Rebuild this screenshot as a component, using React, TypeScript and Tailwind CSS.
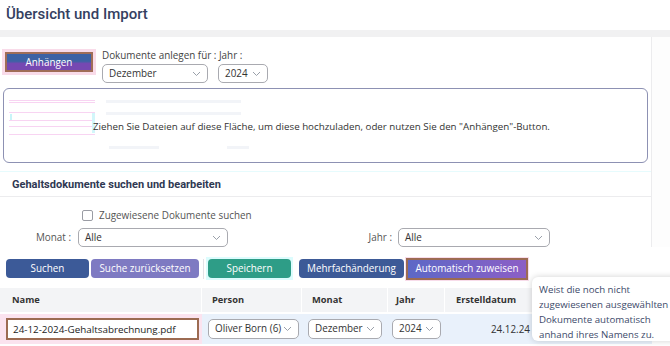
import React from "react";

const Chevron = () => (
  <svg width="9" height="6" viewBox="0 0 9 6" className="shrink-0">
    <path d="M1 1l3.5 3.5L8 1" fill="none" stroke="#9aa0aa" strokeWidth="1" />
  </svg>
);

const Select = ({ value, className = "" }: { value: string; className?: string }) => (
  <div
    className={`flex items-center justify-between h-[19px] rounded-[5px] border border-[#a9aab0] bg-white pl-[6px] pr-[6px] text-[9.9px] text-[#333] whitespace-nowrap ${className}`}
  >
    <span className="leading-none">{value}</span>
    <Chevron />
  </div>
);

export default function App() {
  return (
    <div
      className="relative w-[670px] h-[346px] overflow-hidden bg-white text-[#444]"
      style={{ fontFamily: '"Open Sans", "Noto Sans", sans-serif' }}
    >
      {/* Title */}
      <div className="h-[30px] pl-[6px] pt-[3px]">
        <h1
          className="text-[15px] font-medium text-[#34405f] leading-[22px]"
          style={{ fontFamily: 'Roboto, "Noto Sans", sans-serif' }}
        >
          Übersicht und Import
        </h1>
      </div>
      <div className="h-[7px] bg-[#f1f1f2]" />

      <div className="flex">
        {/* main card */}
        <div className="w-[652px] border-r border-[#ececee]">
          {/* Anhängen row */}
          <div className="flex items-start pt-[12px] pl-[2px] h-[51px]">
            <div className="flex p-[3px] bg-[#f9dbe9]">
              <div
                className="w-[88px] h-[20px] border-2 border-[#a06d57] flex items-center justify-center text-[9.9px] text-white"
                style={{ background: "linear-gradient(#3d62a4 0%, #3d62a4 45%, #7648b2 60%, #7648b2 100%)" }}
              >
                Anhängen
              </div>
            </div>
            <div className="ml-[6px] flex flex-col">
              <div className="text-[9.9px] leading-[13px] text-[#444]">Dokumente anlegen für : Jahr :</div>
              <div className="flex gap-[10px] mt-[2px]">
                <Select value="Dezember" className="w-[106px]" />
                <Select value="2024" className="w-[50px]" />
              </div>
            </div>
          </div>

          {/* Drop zone */}
          <div className="mx-[3px] h-[75px] rounded-[6px] border border-[#8d91b3] relative">
            {/* ghost artifacts */}
            <div className="absolute left-[5px] top-[11px] w-[86px] h-[3px] border-y border-[#f8d4f2]" />
            <div className="absolute left-[5px] top-[23px] w-[86px] h-[9px] border-y border-[#f8d4f2]" />
            <div className="absolute left-[5px] top-[37px] w-[86px] h-[9px] border-y border-[#f8d4f2]" />
            <div className="absolute left-[6px] top-[25px] w-[2px] h-[6px] bg-[#c8f4f8]" />
            <div className="absolute left-[88px] top-[24px] w-[3px] h-[20px] bg-[#d2f6fa]" />
            <div className="absolute left-[102px] top-[11px] w-[135px] h-[3px] bg-[#f2f4f8]" />
            <div className="absolute left-[102px] top-[23px] w-[135px] h-[3px] bg-[#f2f4f8]" />
            <div className="absolute left-[105px] top-[57px] w-[50px] h-[3px] bg-[#f2f4f8]" />
            <div className="absolute left-[223px] top-[57px] w-[22px] h-[3px] bg-[#f2f4f8]" />
            <div className="absolute left-[89px] top-[31px] text-[9.75px] leading-[14px] text-[#333] whitespace-nowrap">
              Ziehen Sie Dateien auf diese Fläche, um diese hochzuladen, oder nutzen Sie den "Anhängen"-Button.
            </div>
          </div>

          {/* Section header */}
          <div className="mt-[8px] h-[26px] border-b border-[#ececee] flex items-center pl-[12px] border-t border-t-[#e6fbfd]">
            <h2
              className="text-[11px] font-bold text-[#2f3852] mt-[3px]"
              style={{ fontFamily: 'Roboto, "Noto Sans", sans-serif' }}
            >
              Gehaltsdokumente suchen und bearbeiten
            </h2>
          </div>

          {/* checkbox */}
          <div className="flex items-center pl-[82px] mt-[12px] h-[12px]">
            <div className="w-[11px] h-[11px] rounded-[2px] border border-[#9a9ca4] bg-white" />
            <span className="ml-[6px] text-[9.9px] text-[#555]">Zugewiesene Dokumente suchen</span>
          </div>

          {/* Monat / Jahr */}
          <div className="flex items-center mt-[7px] h-[19px]">
            <span className="w-[78px] pr-[7px] text-right text-[9.9px] text-[#555] whitespace-nowrap">Monat :</span>
            <Select value="Alle" className="w-[150px]" />
            <span className="ml-[130px] w-[40px] pr-[6px] text-right text-[9.9px] text-[#555] whitespace-nowrap">Jahr :</span>
            <Select value="Alle" className="w-[152px]" />
          </div>
        </div>
        <div className="flex-1 bg-[#fdfdfd]" />
      </div>

      {/* Buttons */}
      <div className="absolute left-0 top-[256px] w-[652px]">
        <div className="flex items-center pl-[6px] h-[25px]">
          <button className="w-[83px] h-[19px] rounded-[4px] bg-[#3c5a98] text-white text-[9.9px]">Suchen</button>
          <button className="ml-[2px] w-[108px] h-[19px] rounded-[4px] bg-[#7e7ac2] text-white text-[9.9px] whitespace-nowrap">Suche zurücksetzen</button>
          <div className="ml-[4px] w-px h-[20px] bg-[#e2e2e6]" />
          <div className="ml-[2px] flex p-[2px] bg-[#dcfcfd]">
            <button className="w-[83px] h-[19px] rounded-[4px] bg-[#2e9d87] text-white text-[9.9px]">Speichern</button>
          </div>
          <button className="ml-[6px] w-[105px] h-[19px] rounded-[4px] bg-[#3d5a97] text-white text-[9.9px] whitespace-nowrap">Mehrfachänderung</button>
          <div className="ml-[1px] flex p-[1px] bg-[#f8dcea]">
            <div
              className="w-[122px] h-[22px] border-2 border-[#9c6b52] flex items-center justify-center text-[9.9px] text-white whitespace-nowrap"
              style={{ background: "linear-gradient(90deg, #5d68c6, #8c5fc6)" }}
            >
              Automatisch zuweisen
            </div>
          </div>
        </div>
      </div>

      {/* Table */}
      <div className="absolute left-0 top-[288px] w-[652px]">
        <div className="grid grid-cols-[202px_100px_86px_57px_1fr] h-[24px] bg-[#f3f4f6] text-[9.3px] font-bold text-[#333]">
          <div className="flex items-center pl-[12px] border-r border-white">Name</div>
          <div className="flex items-center pl-[10px] border-r border-white">Person</div>
          <div className="flex items-center pl-[10px] border-r border-white">Monat</div>
          <div className="flex items-center pl-[8px] border-r border-white">Jahr</div>
          <div className="flex items-center pl-[11px]">Erstelldatum</div>
        </div>
        <div className="grid grid-cols-[202px_100px_86px_57px_90px_1fr] h-[30px] mt-[2px] bg-[#e9f1fb] items-center">
          <div className="h-full bg-[#fbe3ef] flex items-center pl-[6px]">
            <div className="w-[193px] h-[22px] border-2 border-[#9c6b52] bg-white flex items-center pl-[5px] text-[9.85px] text-[#222] whitespace-nowrap">
              24-12-2024-Gehaltsabrechnung.pdf
            </div>
          </div>
          <div className="pl-[6px]">
            <Select value="Oliver Born (6)" className="w-[91px] h-[20px]" />
          </div>
          <div className="pl-[6px]">
            <Select value="Dezember" className="w-[74px] h-[20px]" />
          </div>
          <div className="pl-[4px]">
            <Select value="2024" className="w-[49px] h-[20px]" />
          </div>
          <div className="text-right pr-[5px] text-[9.9px] text-[#333]">24.12.24</div>
          <div />
        </div>
      </div>

      {/* Tooltip */}
      <div className="absolute left-[532px] top-[277px] w-[150px] h-[64px] rounded-[6px] bg-white shadow-[0_0_6px_rgba(0,0,0,0.18)] pl-[7px] pt-[5px] text-[9.7px] leading-[15px] text-[#3d4a6a] whitespace-nowrap">
        Weist die noch nicht
        <br />
        zugewiesenen ausgewählten
        <br />
        Dokumente automatisch
        <br />
        anhand ihres Namens zu.
      </div>
    </div>
  );
}
